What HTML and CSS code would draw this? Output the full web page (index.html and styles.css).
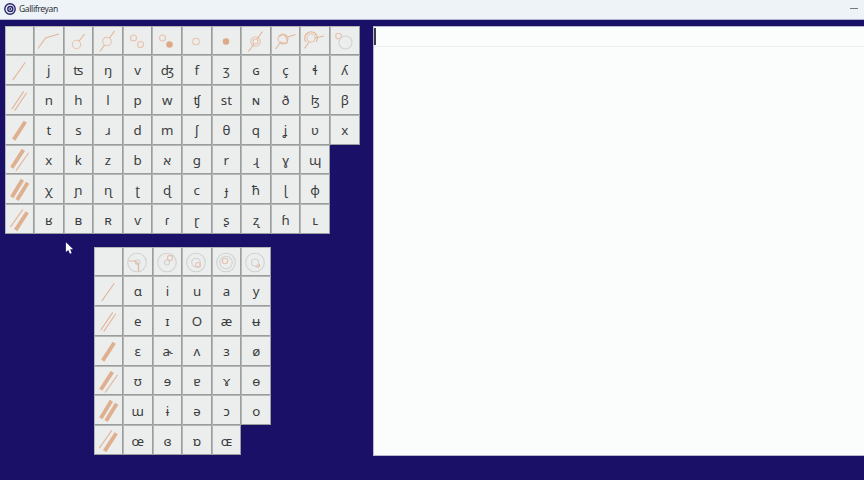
FILE: index.html
```html
<!DOCTYPE html>
<html lang="en">
<head>
<meta charset="utf-8">
<title>Gallifreyan</title>
<link rel="stylesheet" href="styles.css">
</head>
<body>
<svg class="defs" aria-hidden="true">
  <symbol id="s1" viewBox="0 0 28 29"><path class="dash" d="M7.500 25 20.500 6.500"/></symbol>
  <symbol id="s2" viewBox="0 0 28 29"><path class="thin" d="M6.500 24 19 5.500M9.500 25.500 22 7"/></symbol>
  <symbol id="s3" viewBox="0 0 28 29"><path class="thick" d="M8.500 24.500 20.500 6"/></symbol>
  <symbol id="s4" viewBox="0 0 28 29"><path class="thick" d="M6.500 23.500 18.500 5"/><path class="thin" d="M11 26.500 24 8"/></symbol>
  <symbol id="s5" viewBox="0 0 28 29"><path class="thick" d="M6.500 23 17.500 5M12 26 23 8"/></symbol>
  <symbol id="s6" viewBox="0 0 28 29"><path class="thin" d="M5 23 18 4.500"/><path class="thick" d="M10.500 26 22.500 7.500"/></symbol>
</svg>
<header class="titlebar">
  <svg class="logo" viewBox="0 0 12 12"><circle cx="6" cy="6" r="5.200"/><circle cx="6.300" cy="6" r="2.500"/><circle class="dot" cx="6.300" cy="6" r="1"/></svg>
  <span class="title">Gallifreyan</span>
  <span class="minimize"></span>
</header>
<main class="workspace">
  <section class="keys">
    <div class="grid consonants">
      <b></b>
      <b><svg viewBox="0 0 28 28"><path class="thin" d="M4 21.500 11.500 11 25 7"/></svg></b>
      <b><svg viewBox="0 0 28 28"><circle cx="12.500" cy="17.500" r="4.200"/><path class="thin" d="M15 14 20.500 7"/></svg></b>
      <b><svg viewBox="0 0 28 28"><circle cx="14" cy="14.500" r="4.300"/><path class="thin" d="M16.500 11 21.500 4M11.500 18 7 24.500"/></svg></b>
      <b><svg viewBox="0 0 28 28"><circle cx="10.500" cy="11" r="3"/><circle cx="17.500" cy="17.500" r="3"/></svg></b>
      <b><svg viewBox="0 0 28 28"><circle cx="10.500" cy="11" r="3"/><circle class="solid" cx="17.500" cy="17.500" r="2.700"/></svg></b>
      <b><svg viewBox="0 0 28 28"><circle cx="14" cy="14.500" r="3.300"/></svg></b>
      <b><svg viewBox="0 0 28 28"><circle class="solid" cx="14" cy="14.500" r="2.700"/></svg></b>
      <b><svg viewBox="0 0 28 28"><circle cx="14.500" cy="14.500" r="4.700"/><circle cx="14.500" cy="14.500" r="2.500"/><path class="thin" d="M16 12 21.500 4.500M13 17 7.500 24.500"/></svg></b>
      <b><svg viewBox="0 0 28 28"><circle cx="12" cy="12" r="5"/><path class="thin" d="M17 10 24.500 7.500M9.500 15.500 4.500 22M8 9.500Q14 5 16 12T9 15"/></svg></b>
      <b><svg viewBox="0 0 28 28"><circle cx="11" cy="11" r="4"/><path class="thin" d="M6 15A6.300 6.300 0 1 1 16 15M15 11 24 9M9 15 4.500 21.500"/></svg></b>
      <b><svg viewBox="0 0 28 28"><circle cx="8.500" cy="9" r="2.800"/><circle class="gray" cx="15.500" cy="15.500" r="6.500"/></svg></b>
      <b><svg><use href="#s1"/></svg></b><i>j</i><i>ʦ</i><i>ŋ</i><i>v</i><i>ʤ</i><i>f</i><i>ʒ</i><i>ɢ</i><i>ç</i><i>ɬ</i><i>ʎ</i>
      <b><svg><use href="#s2"/></svg></b><i>n</i><i>h</i><i>l</i><i>p</i><i>w</i><i>ʧ</i><i>st</i><i>ɴ</i><i>ð</i><i>ɮ</i><i>β</i>
      <b><svg><use href="#s3"/></svg></b><i>t</i><i>s</i><i>ɹ</i><i>d</i><i>m</i><i>ʃ</i><i>θ</i><i>q</i><i>ʝ</i><i>ʋ</i><i>x</i>
      <b><svg><use href="#s4"/></svg></b><i>x</i><i>k</i><i>z</i><i>b</i><i>א</i><i>ɡ</i><i>r</i><i>ɻ</i><i>ɣ</i><i>ɰ</i>
      <b class="start"><svg><use href="#s5"/></svg></b><i>χ</i><i>ɲ</i><i>ɳ</i><i>ʈ</i><i>ɖ</i><i>c</i><i>ɟ</i><i>ħ</i><i>ɭ</i><i>ɸ</i>
      <b class="start"><svg><use href="#s6"/></svg></b><i>ʁ</i><i>ʙ</i><i>ʀ</i><i>ⱱ</i><i>ɾ</i><i>ɽ</i><i>ʂ</i><i>ʐ</i><i>ɦ</i><i>ʟ</i>
    </div>
    <div class="grid vowels">
      <b></b>
      <b><svg viewBox="0 0 28 28"><circle class="gray" cx="14" cy="14.500" r="9.300"/><circle class="gray" cx="14.500" cy="14" r="2.300"/><path class="thin" d="M6 13H12Q15 15 15.500 17V23"/></svg></b>
      <b><svg viewBox="0 0 28 28"><circle class="gray" cx="14" cy="14.500" r="9.300"/><circle class="gray" cx="14" cy="14.500" r="2.500"/><circle cx="17" cy="10" r="2.600"/></svg></b>
      <b><svg viewBox="0 0 28 28"><circle class="gray" cx="14" cy="14.500" r="9.300"/><circle class="gray" cx="14" cy="14.500" r="4.300"/><circle cx="16" cy="17" r="2.500"/></svg></b>
      <b><svg viewBox="0 0 28 28"><circle class="gray" cx="14" cy="14.500" r="9.300"/><circle class="gray" cx="14" cy="14.500" r="6.300"/><circle cx="13" cy="13" r="2.700"/></svg></b>
      <b><svg viewBox="0 0 28 28"><circle class="gray" cx="14" cy="14.500" r="9.300"/><circle class="gray" cx="14" cy="14.500" r="3.500"/><path class="thin" d="M14.500 18.500Q19 20 18.500 16"/></svg></b>
      <b><svg><use href="#s1"/></svg></b><i>ɑ</i><i>i</i><i>u</i><i>a</i><i>y</i>
      <b><svg><use href="#s2"/></svg></b><i>e</i><i>ɪ</i><i>O</i><i>æ</i><i>ʉ</i>
      <b><svg><use href="#s3"/></svg></b><i>ɛ</i><i class="rhotic">a˞</i><i>ʌ</i><i>ɜ</i><i>ø</i>
      <b><svg><use href="#s4"/></svg></b><i>ʊ</i><i>ɘ</i><i>ɐ</i><i>ɤ</i><i>ɵ</i>
      <b><svg><use href="#s5"/></svg></b><i>ɯ</i><i>ɨ</i><i>ə</i><i>ɔ</i><i>o</i>
      <b><svg><use href="#s6"/></svg></b><i>œ</i><i>ɞ</i><i>ɒ</i><i>ɶ</i>
    </div>
  </section>
  <section class="editor"><div class="line"><span class="caret"></span></div></section>
</main>
<svg class="pointer" viewBox="0 0 10 15"><path d="M1 1V12L3.600 9.800 5.500 14 7.400 13 5.700 9H9Z"/></svg>
</body>
</html>
```
FILE: styles.css
```css
* { box-sizing: border-box; }
body {
  margin: 0;
  width: 864px;
  height: 480px;
  overflow: hidden;
  display: flex;
  flex-direction: column;
  background: #1a1068;
  font-family: "Noto Sans", "DejaVu Sans", sans-serif;
}
.defs { position: absolute; width: 0; height: 0; }
.titlebar {
  height: 20px;
  flex: none;
  display: flex;
  align-items: center;
  padding: 0 6px 2px 4px;
  background: #edf3f7;
  border-bottom: 1px solid #b3b5cd;
}
.logo { width: 12px; height: 12px; fill: none; }
.logo circle { stroke: #26246d; stroke-width: 1.4; }
.logo .dot { fill: #26246d; stroke: none; }
.title { margin-left: 3px; font: 8.500px/16px "Noto Sans", sans-serif; letter-spacing: -0.350px; color: #303238; }
.minimize { margin-left: auto; width: 8px; height: 1px; background: #777b7e; }
.workspace { flex: 1; display: flex; }
.keys { width: 373px; padding: 6px 0 0 5px; }
.grid { display: grid; grid-auto-rows: 29.850px; }
.consonants { grid-template: 29px / 29px repeat(11, 29.600px); width: 355px; }
.vowels { grid-template: 29px / 29px repeat(5, 29.600px); width: 177px; margin: 13px 0 0 89px; }
.grid b, .grid i {
  display: flex;
  align-items: center;
  justify-content: center;
  background: #eceeed;
  border: 1px solid #999d9b;
  border-left-color: #b4b7b6;
  border-top-color: #b4b7b6;
  font-style: normal;
  font-size: 13.300px;
  line-height: 18px;
  color: #3b3d40;
}
.grid i { padding-top: 1px; }
.grid .rhotic { letter-spacing: -0.500px; }
.start { grid-column-start: 1; }
.grid svg { flex: none; width: 28px; height: 28px; margin-right: 1.500px; fill: none; }
circle { stroke: #e7c3b0; stroke-width: 1.1; }
.thin, .dash { stroke: #e3b69d; stroke-width: 1.2; }
.thick { stroke: #dfb090; stroke-width: 4; }
.solid { fill: #dfa988; stroke: #dfa988; }
.gray { stroke: #d0d2d1; }
.editor { flex: 1; height: 430px; margin-top: 6px; background: #fbfdfc; border: 1px solid #bab8d1; border-right: 0; }
.line { display: flow-root; height: 20px; border-bottom: 1px solid #eceeed; }
.caret { display: block; width: 2px; height: 17px; margin-top: 1px; background: #3b3b4a; }
.pointer { position: absolute; left: 65px; top: 241px; width: 9px; height: 14px; fill: #fff; }
```
